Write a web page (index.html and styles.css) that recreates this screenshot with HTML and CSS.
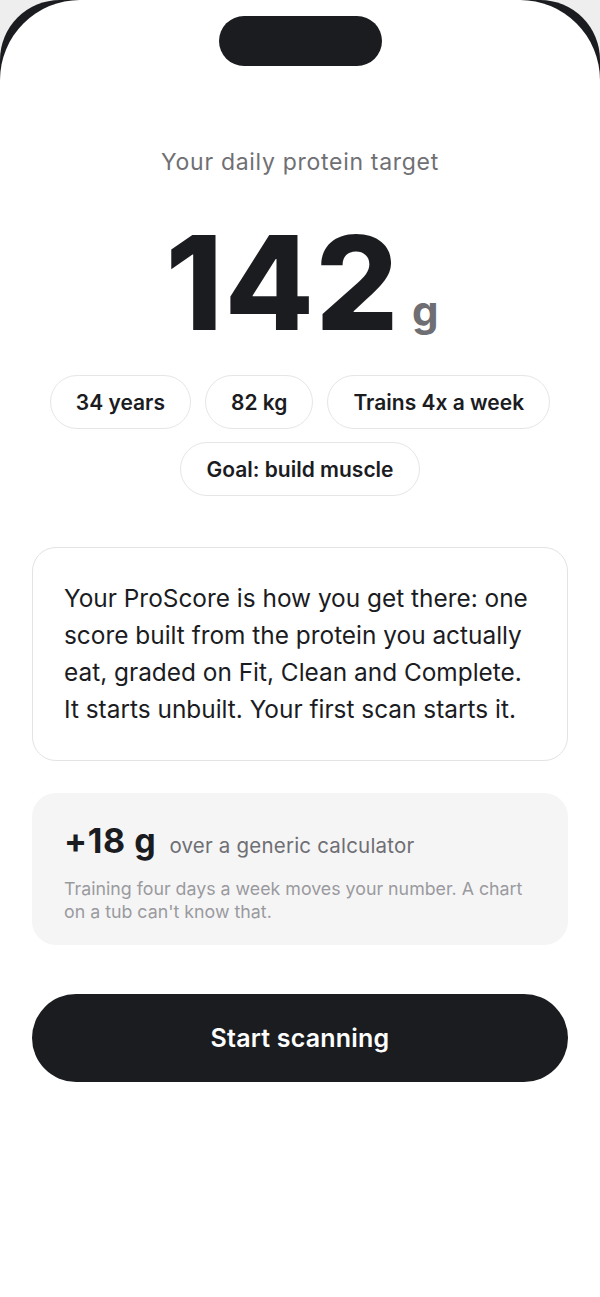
FILE: index.html
```html
<!DOCTYPE html>
<html lang="en">
<head>
<meta charset="utf-8">
<title>Your daily protein target</title>
<link rel="stylesheet" href="styles.css">
</head>
<body>
<div class="device">
  <div class="screen">
    <div class="island"></div>
    <main class="content">
      <p class="eyebrow">Your daily protein target</p>
      <div class="target">
        <span class="target-num">142</span><span class="target-unit">g</span>
      </div>
      <ul class="chips">
        <li class="chip">34 years</li>
        <li class="chip">82 kg</li>
        <li class="chip">Trains 4x a week</li>
        <li class="chip">Goal: build muscle</li>
      </ul>
      <section class="card card-outline">
        <p class="card-text">Your ProScore is how you get there: one score built from the protein you actually eat, graded on Fit, Clean and Complete. It starts unbuilt. Your first scan starts it.</p>
      </section>
      <section class="card card-fill">
        <p class="delta"><span class="delta-num">+18 g</span><span class="delta-label">over a generic calculator</span></p>
        <p class="delta-note">Training four days a week moves your number. A chart on a tub can't know that.</p>
      </section>
      <button class="cta" type="button">Start scanning</button>
    </main>
  </div>
</div>
</body>
</html>
```
FILE: styles.css
```css
* { box-sizing: border-box; }
html { background: #eeeeee; }
body {
  margin: 0;
  font-family: Inter, "Noto Sans", "Liberation Sans", sans-serif;
  color: #1c1c1e;
}
.device {
  background: #1b1c1f;
  border-radius: 60px 60px 0 0;
  min-height: 1297px;
}
.screen {
  background: #ffffff;
  border-radius: 80px 80px 0 0;
  min-height: 1297px;
  padding-top: 16px;
}
.island {
  width: 163px;
  height: 50px;
  margin: 0 auto;
  background: #1b1c1f;
  border-radius: 25px;
}
.content {
  padding: 0 32px;
  display: flex;
  flex-direction: column;
}
.eyebrow {
  margin: 82px 0 0;
  text-align: center;
  font-size: 23px;
  line-height: 28px;
  color: #707074;
  letter-spacing: 0.7px;
}
.target {
  margin-top: 41px;
  display: flex;
  justify-content: center;
  align-items: baseline;
  line-height: 1;
  padding-left: 4px;
}
.target-num {
  font-size: 130px;
  font-weight: 800;
  letter-spacing: 1.5px;
  color: #1b1c1f;
  line-height: 132px;
}
.target-unit {
  font-size: 42px;
  font-weight: 700;
  color: #6e6e73;
  margin-left: 12px;
  position: relative;
  top: -4px;
}
.chips {
  list-style: none;
  margin: 26px 0 0;
  padding: 0;
  display: flex;
  flex-wrap: wrap;
  justify-content: center;
  gap: 13px 14px;
}
.chip {
  height: 54px;
  padding: 0 25px;
  display: flex;
  align-items: center;
  border: 1px solid #e6e6e8;
  border-radius: 27px;
  font-size: 21px;
  font-weight: 600;
  color: #1b1c1f;
}
.card {
  border-radius: 24px;
}
.card-outline {
  margin-top: 51px;
  border: 1px solid #e3e3e6;
  padding: 32px 31px 32px;
}
.card-text {
  margin: 0;
  font-size: 24.4px;
  line-height: 37px;
  color: #1b1c1f;
}
.card-fill {
  margin-top: 32px;
  background: #f5f5f6;
  padding: 28px 32px 22px;
}
.delta {
  margin: 0;
  display: flex;
  align-items: baseline;
  gap: 13px;
  line-height: 40px;
}
.delta-num {
  font-size: 34px;
  font-weight: 700;
  color: #1b1c1f;
  letter-spacing: 0.6px;
}
.delta-label {
  font-size: 20.5px;
  color: #6e6e73;
  letter-spacing: 0.2px;
}
.delta-note {
  margin: 11px 0 0;
  font-size: 17.8px;
  line-height: 23px;
  color: #9a9a9e;
}
.cta {
  margin-top: 49px;
  height: 88px;
  border: 0;
  border-radius: 44px;
  background: #1b1c1f;
  color: #ffffff;
  font-family: inherit;
  font-size: 25px;
  font-weight: 600;
  letter-spacing: 0.2px;
  cursor: pointer;
}
```
